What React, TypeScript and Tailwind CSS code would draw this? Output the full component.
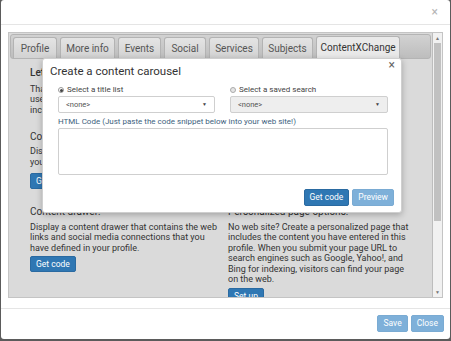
import React from 'react';

const tabs = [
  { label: 'Profile', w: 'w-[44px]' },
  { label: 'More info', w: 'w-[55px]' },
  { label: 'Events', w: 'w-[43px]' },
  { label: 'Social', w: 'w-[42px]' },
  { label: 'Services', w: 'w-[50px]' },
  { label: 'Subjects', w: 'w-[51px]' },
];

function BlueButton({ children, faded, tall }: { children: React.ReactNode; faded?: boolean; tall?: boolean }) {
  return (
    <button
      className={
        (tall ? 'h-[17px] ' : 'h-[16px] ') +
        'px-[5px] rounded-[2px] border text-[8.5px] leading-none text-white ' +
        (faded ? 'bg-[#7eb0d9] border-[#7aabd3]' : 'bg-[#2f77b3] border-[#2a6aa1]')
      }
    >
      {children}
    </button>
  );
}

function Select({ disabled }: { disabled?: boolean }) {
  return (
    <div
      className={
        'flex h-[17px] items-center justify-between rounded-[2px] border border-[#cfcfcf] px-[7px] text-[7.5px] text-[#555] ' +
        (disabled ? 'bg-[#eeeeee]' : 'bg-white')
      }
    >
      <span>&lt;none&gt;</span>
      <span className="text-[5px] text-[#444]">▼</span>
    </div>
  );
}

export default function App() {
  return (
    <div className="h-[341px] w-[451px] overflow-hidden bg-[#5b5b5b] font-['Roboto',sans-serif]">
      <div className="relative ml-[1px] flex h-[339px] w-[449px] flex-col rounded-[3px] bg-white">
        {/* header */}
        <div className="flex h-[25px] shrink-0 items-center justify-end border-b border-[#e5e5e5] pr-[12px]">
          <span className="text-[12px] leading-none text-[#b5b5b5]">×</span>
        </div>

        {/* body */}
        <div className="px-[7px] pb-[10px] pt-[7px]">
          <div className="flex h-[266px] border border-[#c4c4c4]">
            <div className="flex-1 overflow-hidden bg-[#dadada]">
              <div className="mx-[1px] mt-[1px] flex h-[25px] items-end gap-[3px] rounded-[3px] border border-[#b4b4b4] bg-gradient-to-b from-[#d2d2d2] to-[#bdbdbd] pl-[2px]">
                {tabs.map(t => (
                  <div
                    key={t.label}
                    className={t.w + ' flex h-[21px] items-center justify-center rounded-t-[3px] border border-b-0 border-[#b3b3b3] bg-gradient-to-b from-[#e4e4e4] to-[#d2d2d2] text-[10px] text-[#555]'}
                  >
                    {t.label}
                  </div>
                ))}
                <div className="flex h-[22px] w-[84px] items-center justify-center rounded-t-[3px] border border-b-0 border-[#b3b3b3] bg-[#e9e9e9] text-[10px] text-[#333]">
                  ContentXChange
                </div>
              </div>

              <div className="grid grid-cols-[190px_195px] gap-x-[8px] pl-[21px] pt-[8px] text-[9px] leading-[10.4px] text-[#333]">
                <div>
                  <div className="text-[10px] font-medium leading-[12px]">Let visitors browse</div>
                  <p className="mt-[5px]">
                    That's why we offer tools that allow you to<br />
                    use your content on your own web site,<br />
                    including carousels and drawers.
                  </p>
                  <div className="mt-[16px] text-[10px] leading-[12px]">Content carousel:</div>
                  <p className="mt-[3px]">
                    Display a carousel of titles on the pages of<br />
                    your own web site.
                  </p>
                  <div className="mt-[6px]"><BlueButton>Get code</BlueButton></div>
                </div>
                <div>
                  <div className="text-[10px] leading-[12px]">Share</div>
                  <p className="mt-[5px]">Embed your titles.</p>
                </div>

                <div className="mt-[17px]">
                  <div className="text-[10px] leading-[12px]">Content drawer:</div>
                  <p className="mt-[4px]">
                    Display a content drawer that contains the web<br />
                    links and social media connections that you<br />
                    have defined in your profile.
                  </p>
                  <div className="mt-[3px]"><BlueButton>Get code</BlueButton></div>
                </div>
                <div className="mt-[17px]">
                  <div className="text-[10px] leading-[12px]">Personalized page options:</div>
                  <p className="mt-[4px]">
                    No web site? Create a personalized page that<br />
                    includes the content you have entered in this<br />
                    profile. When you submit your page URL to<br />
                    search engines such as Google, Yahoo!, and<br />
                    Bing for indexing, visitors can find your page<br />
                    on the web.
                  </p>
                  <div className="mt-[4px]"><BlueButton>Set up</BlueButton></div>
                </div>
              </div>
            </div>

            {/* scrollbar */}
            <div className="flex w-[10px] flex-col items-center border-l border-[#bdbdbd] bg-[#f1f1f1]">
              <span className="mt-[2px] text-[5px] leading-[6px] text-[#777]">▲</span>
              <div className="mt-[2px] h-[178px] w-[7px] bg-[#c1c1c1]" />
              <div className="flex-1" />
              <span className="mb-[2px] text-[5px] leading-[6px] text-[#777]">▼</span>
            </div>
          </div>
        </div>

        {/* footer */}
        <div className="flex flex-1 items-start justify-end gap-[3px] border-t border-[#e5e5e5] pr-[6px] pt-[6px]">
          <BlueButton faded tall>Save</BlueButton>
          <BlueButton faded tall>Close</BlueButton>
        </div>

        {/* content carousel dialog */}
        <div className="absolute left-[41px] top-[58px] h-[155px] w-[360px] rounded-[3px] border border-[#cfcfcf] bg-white shadow-[0_2px_6px_rgba(0,0,0,0.25)]">
          <span className="absolute right-[6px] top-[0px] text-[12px] leading-[12px] text-[#666]">×</span>
          <div className="pl-[7px] pt-[6px] text-[11.5px] leading-[13px] text-[#333]">Create a content carousel</div>
          <div className="mx-[15px] mt-[7px] grid grid-cols-[157px_158px] gap-x-[15px] text-[8px] text-[#444]">
            <div>
              <div className="flex items-center gap-[3px] leading-[10px]">
                <span className="flex h-[6px] w-[6px] items-center justify-center rounded-full border border-[#999] bg-white">
                  <span className="h-[3px] w-[3px] rounded-full bg-[#444]" />
                </span>
                Select a title list
              </div>
              <div className="mt-[1px]"><Select /></div>
            </div>
            <div>
              <div className="flex items-center gap-[3px] leading-[10px]">
                <span className="h-[6px] w-[6px] rounded-full border border-[#aaa] bg-[#e5e5e5]" />
                Select a saved search
              </div>
              <div className="mt-[1px]"><Select disabled /></div>
            </div>
          </div>
          <div className="mx-[15px] mt-[4px] text-[8px] leading-[10px] text-[#3d5f7e]">
            HTML Code (Just paste the code snippet below into your web site!)
          </div>
          <div className="mx-[15px] mt-[1px] h-[47px] w-[330px] rounded-[2px] border border-[#cfcfcf]" />
          <div className="mr-[7px] mt-[14px] flex justify-end gap-[3px]">
            <BlueButton tall>Get code</BlueButton>
            <BlueButton faded tall>Preview</BlueButton>
          </div>
        </div>
      </div>
    </div>
  );
}
